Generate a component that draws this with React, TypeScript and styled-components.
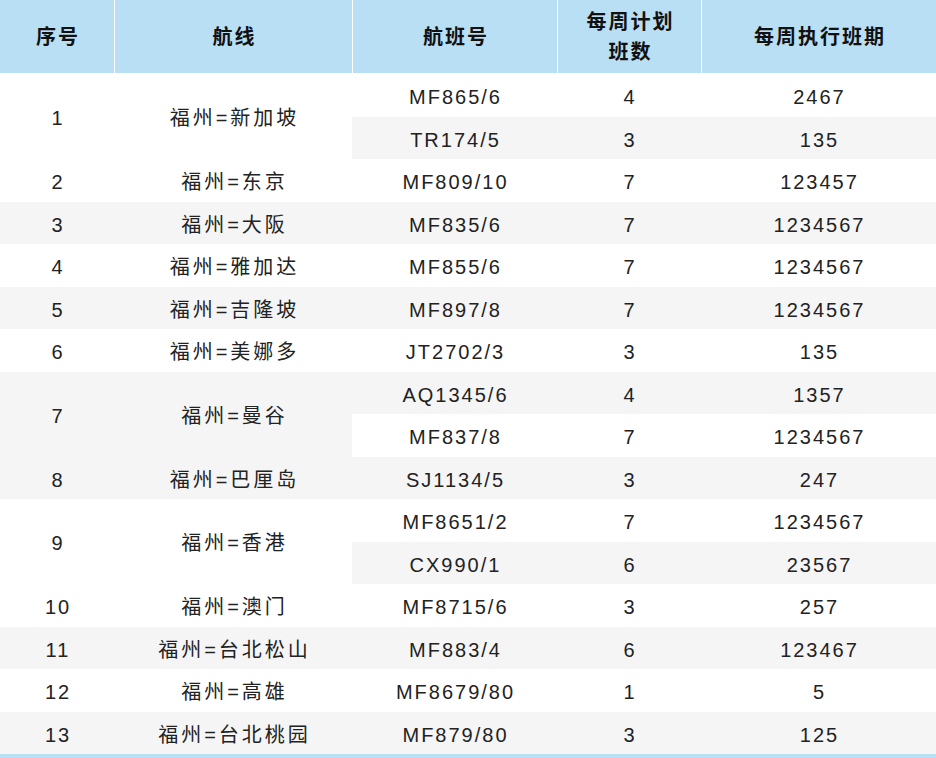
import React from "react";
import styled, { createGlobalStyle } from "styled-components";

const Global = createGlobalStyle`
  html, body { margin: 0; padding: 0; background: #ffffff; }
  body { font-family: "Liberation Sans", "Noto Sans CJK SC", sans-serif; }
`;

const Table = styled.table`
  width: 936px;
  table-layout: fixed;
  border-collapse: separate;
  border-spacing: 0;
  border-bottom: 6px solid #b9dff5;
  font-family: "Liberation Sans", "Noto Sans CJK SC", sans-serif;
`;

const HeadCell = styled.th`
  box-sizing: content-box;
  height: 73px;
  padding: 0 0 0 2px;
  background: #b9dff5;
  color: #111111;
  font-size: 20px;
  font-weight: 700;
  line-height: 30px;
  letter-spacing: 2px;
  text-align: center;
  vertical-align: middle;
  border-left: 1px solid #ffffff;
  border-bottom: 1px solid #ffffff;
  &:first-child { border-left: none; }
`;

const Row = styled.tr`
  & > td { height: 43px; }
  &:nth-child(even) > td { background: #f5f5f5; height: 42px; }
`;

const Cell = styled.td<{ $wide?: boolean }>`
  padding: 3px 0 0 ${(p) => (p.$wide ? 3 : 2)}px;
  box-sizing: border-box;
  background: #ffffff;
  color: #222222;
  font-size: 20px;
  line-height: 24px;
  letter-spacing: ${(p) => (p.$wide ? 3 : 2)}px;
  text-align: center;
  vertical-align: middle;
`;

type Flight = { no: string; plan: string; days: string };
type Route = { id: number; route: string; flights: Flight[] };

const data: Route[] = [
  { id: 1, route: "福州=新加坡", flights: [
    { no: "MF865/6", plan: "4", days: "2467" },
    { no: "TR174/5", plan: "3", days: "135" },
  ] },
  { id: 2, route: "福州=东京", flights: [{ no: "MF809/10", plan: "7", days: "123457" }] },
  { id: 3, route: "福州=大阪", flights: [{ no: "MF835/6", plan: "7", days: "1234567" }] },
  { id: 4, route: "福州=雅加达", flights: [{ no: "MF855/6", plan: "7", days: "1234567" }] },
  { id: 5, route: "福州=吉隆坡", flights: [{ no: "MF897/8", plan: "7", days: "1234567" }] },
  { id: 6, route: "福州=美娜多", flights: [{ no: "JT2702/3", plan: "3", days: "135" }] },
  { id: 7, route: "福州=曼谷", flights: [
    { no: "AQ1345/6", plan: "4", days: "1357" },
    { no: "MF837/8", plan: "7", days: "1234567" },
  ] },
  { id: 8, route: "福州=巴厘岛", flights: [{ no: "SJ1134/5", plan: "3", days: "247" }] },
  { id: 9, route: "福州=香港", flights: [
    { no: "MF8651/2", plan: "7", days: "1234567" },
    { no: "CX990/1", plan: "6", days: "23567" },
  ] },
  { id: 10, route: "福州=澳门", flights: [{ no: "MF8715/6", plan: "3", days: "257" }] },
  { id: 11, route: "福州=台北松山", flights: [{ no: "MF883/4", plan: "6", days: "123467" }] },
  { id: 12, route: "福州=高雄", flights: [{ no: "MF8679/80", plan: "1", days: "5" }] },
  { id: 13, route: "福州=台北桃园", flights: [{ no: "MF879/80", plan: "3", days: "125" }] },
];

export default function App() {
  return (
    <>
      <Global />
      <Table>
        <colgroup>
          <col style={{ width: 114 }} />
          <col style={{ width: 238 }} />
          <col style={{ width: 205 }} />
          <col style={{ width: 144 }} />
          <col style={{ width: 235 }} />
        </colgroup>
        <thead>
          <tr>
            <HeadCell>序号</HeadCell>
            <HeadCell>航线</HeadCell>
            <HeadCell>航班号</HeadCell>
            <HeadCell>每周计划<br />班数</HeadCell>
            <HeadCell>每周执行班期</HeadCell>
          </tr>
        </thead>
        <tbody>
          {data.flatMap((r) =>
            r.flights.map((f, i) => (
              <Row key={`${r.id}-${i}`}>
                {i === 0 && <Cell rowSpan={r.flights.length}>{r.id}</Cell>}
                {i === 0 && (
                  <Cell $wide rowSpan={r.flights.length}>
                    {r.route}
                  </Cell>
                )}
                <Cell>{f.no}</Cell>
                <Cell>{f.plan}</Cell>
                <Cell>{f.days}</Cell>
              </Row>
            ))
          )}
        </tbody>
      </Table>
    </>
  );
}
